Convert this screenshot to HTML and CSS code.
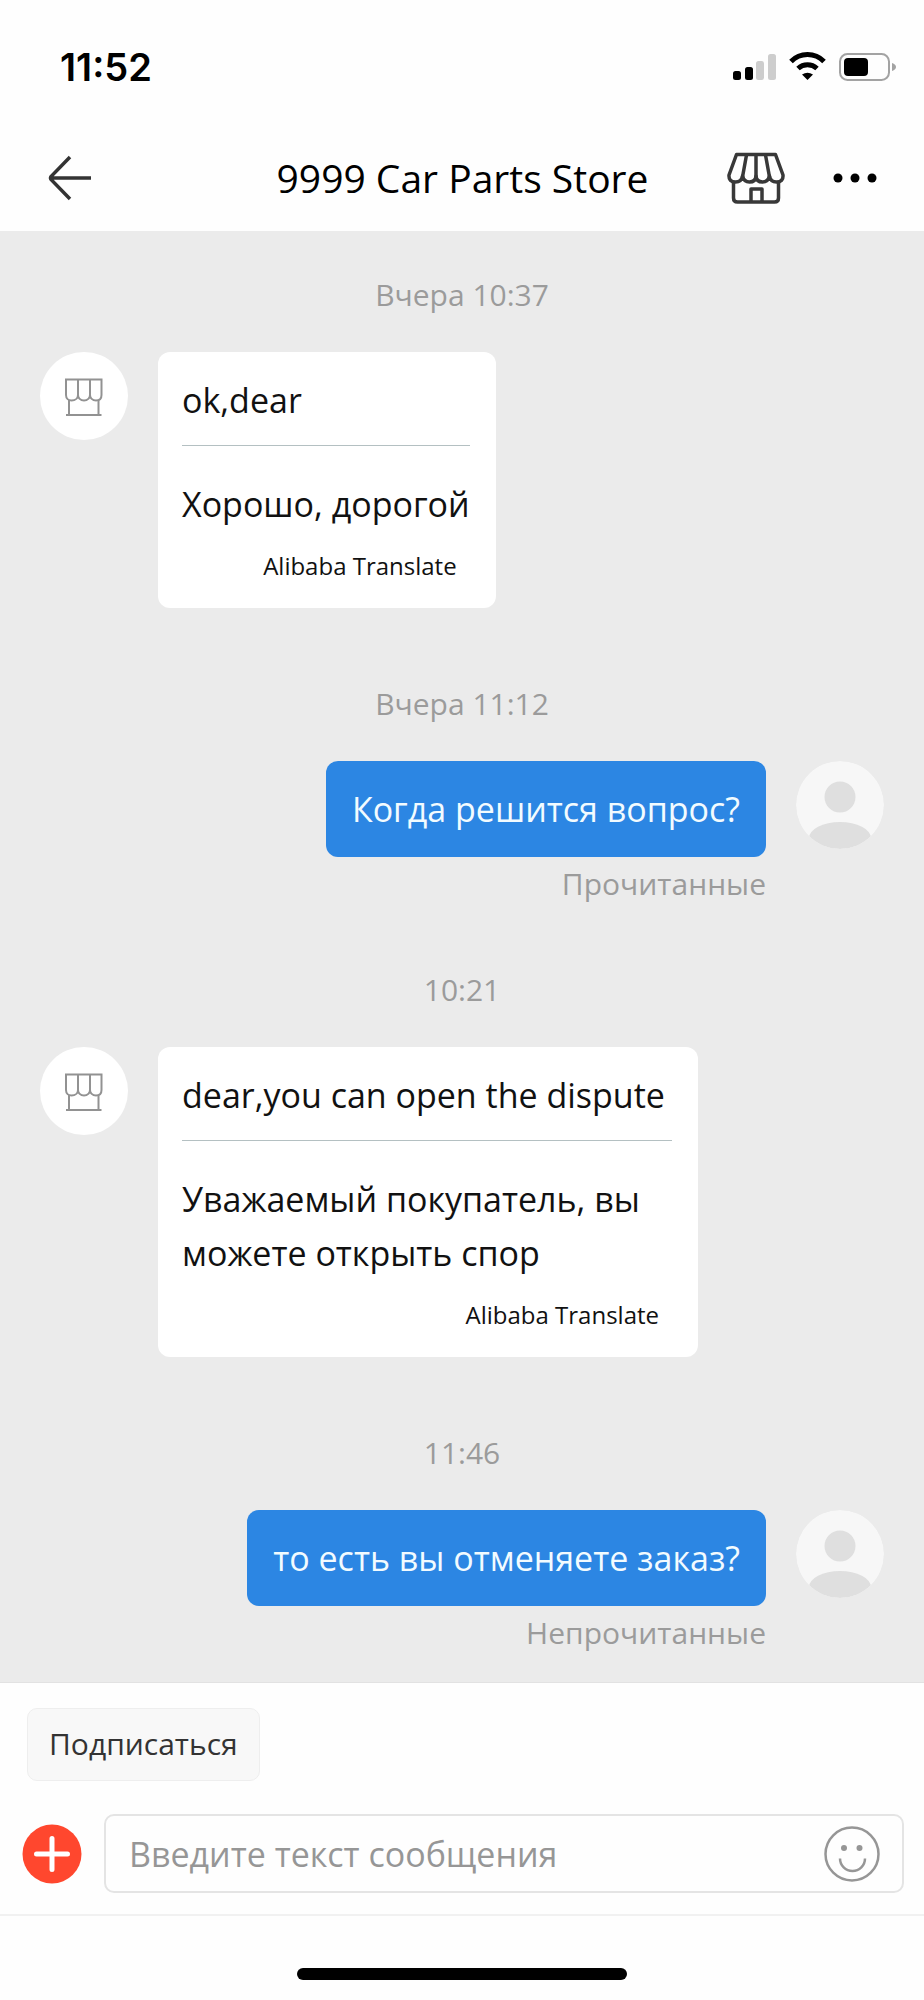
FILE: index.html
```html
<!DOCTYPE html>
<html lang="ru">
<head>
<meta charset="utf-8">
<meta name="viewport" content="width=device-width, initial-scale=1">
<title>9999 Car Parts Store</title>
<link rel="stylesheet" href="styles.css">
</head>
<body>
<svg class="defs" aria-hidden="true">
  <symbol id="shop-light" viewBox="0 0 88 88">
    <g fill="none" stroke="#929292" stroke-width="2">
      <path d="M26 27.500H61.500V43C61.500 46.500 59.500 48.500 56 48.500C52.500 48.500 50 46 50 43C50 46 47.500 48.500 44 48.500C40.500 48.500 38 46 38 43C38 46 35.500 48.500 31.500 48.500C28.500 48.500 26 46.500 26 43Z"/>
      <path d="M38 28V44M50 28V44M29 48V62M58.500 48V62M26 63H61.500"/>
    </g>
  </symbol>
  <symbol id="person" viewBox="0 0 88 88">
    <clipPath id="round"><circle cx="44" cy="44" r="44"/></clipPath>
    <g clip-path="url(#round)">
      <rect width="88" height="88" fill="#f7f7f7"/>
      <circle cx="44" cy="36" r="15.500" fill="#dfdfdf"/>
      <ellipse cx="44" cy="77" rx="31" ry="16" fill="#dfdfdf"/>
    </g>
  </symbol>
</svg>
<div class="screen">
  <div class="status-bar">
    <time class="clock">11:52</time>
    <svg class="indicators" viewBox="0 0 164 30" aria-hidden="true">
      <rect x="0" y="19" width="8" height="9" rx="2.500"/>
      <rect x="12" y="15" width="8" height="13" rx="2.500"/>
      <g fill="#cdcdcd"><rect x="23" y="9" width="8" height="19" rx="2.500"/><rect x="35" y="2" width="8" height="26" rx="2.500"/></g>
      <g fill="none" stroke="#000" stroke-width="5">
        <path d="M58 9.500A23 23 0 0 1 91 9.500"/>
        <path d="M65 16.500A14 14 0 0 1 84 16.500"/>
      </g>
      <path d="M69 22.500Q74.500 19 80 22.500L74.500 28Z"/>
      <rect x="107" y="2" width="49" height="26" rx="7.500" fill="none" stroke="#a3a3a3" stroke-width="2"/>
      <rect x="111" y="6" width="24" height="18" rx="4"/>
      <path d="M159 11Q163 12.500 163 15T159 19Z" fill="#a3a3a3"/>
    </svg>
  </div>
  <header class="header">
    <button class="icon-button back" aria-label="Назад">
      <svg width="44" height="46" viewBox="0 0 44 46" fill="none" stroke="#333" stroke-width="3.500"><path d="M22 2L3 21.500Q2 23 3 24.500L22 44M2 23H43"/></svg>
    </button>
    <h1 class="title">9999 Car Parts Store</h1>
    <div class="actions">
      <button class="icon-button" aria-label="Магазин">
        <svg width="58" height="52" viewBox="0 0 58 52" fill="none" stroke="#383838" stroke-width="3.500" stroke-linejoin="round">
          <path d="M9.500 2.500H48.500L56 23Q56.500 30 49.500 30Q43.500 30 42.500 24Q41 30 35.500 30Q29.500 30 29 24Q28.500 30 22.500 30Q17 30 15.500 24Q14.500 30 8.500 30Q1.500 30 2 23Z"/>
          <path d="M19.500 3L15.500 25M29 3V25M38.500 3L42.500 25M6.500 30V46Q6.500 50 10.500 50H47.500Q51.500 50 51.500 46V30M24 50V37H35V50"/>
        </svg>
      </button>
      <button class="icon-button" aria-label="Ещё">
        <svg width="44" height="44" viewBox="0 0 44 44"><circle cx="5" cy="22" r="4.500"/><circle cx="22" cy="22" r="4.500"/><circle cx="39" cy="22" r="4.500"/></svg>
      </button>
    </div>
  </header>
  <main class="chat">
    <time class="stamp">Вчера 10:37</time>
    <article class="message">
      <svg class="avatar shop"><use href="#shop-light"/></svg>
      <div class="bubble">
        <p class="original">ok,dear</p>
        <p class="translation">Хорошо, дорогой</p>
        <p class="credit">Alibaba Translate</p>
      </div>
    </article>
    <time class="stamp">Вчера 11:12</time>
    <article class="message own">
      <svg class="avatar"><use href="#person"/></svg>
      <div class="sent">
        <p class="bubble">Когда решится вопрос?</p>
        <p class="receipt">Прочитанные</p>
      </div>
    </article>
    <time class="stamp">10:21</time>
    <article class="message">
      <svg class="avatar shop"><use href="#shop-light"/></svg>
      <div class="bubble">
        <p class="original">dear,you can open the dispute</p>
        <p class="translation">Уважаемый покупатель, вы можете открыть спор</p>
        <p class="credit">Alibaba Translate</p>
      </div>
    </article>
    <time class="stamp">11:46</time>
    <article class="message own">
      <svg class="avatar"><use href="#person"/></svg>
      <div class="sent">
        <p class="bubble">то есть вы отменяете заказ?</p>
        <p class="receipt">Непрочитанные</p>
      </div>
    </article>
  </main>
  <footer class="composer">
    <button class="follow">Подписаться</button>
    <div class="entry">
      <button class="icon-button" aria-label="Добавить">
        <svg width="60" height="60" viewBox="0 0 60 60"><circle cx="30" cy="30" r="29.500" fill="#ff472e"/><path d="M30 14.500V45.500M14.500 30H45.500" stroke="#fff" stroke-width="5" stroke-linecap="round"/></svg>
      </button>
      <div class="field">
        <input class="text" type="text" aria-label="Сообщение" placeholder="Введите текст сообщения">
        <button class="icon-button" aria-label="Эмодзи">
          <svg width="56" height="56" viewBox="0 0 56 56" fill="none" stroke="#969696" stroke-width="2.500"><circle cx="28" cy="28" r="26.500"/><path d="M16 32.500A12.500 12.500 0 0 0 41 32.500"/><g fill="#969696" stroke="none"><circle cx="20" cy="22" r="3"/><circle cx="35.500" cy="22" r="3"/></g></svg>
        </button>
      </div>
    </div>
  </footer>
  <div class="home"><div class="home-bar"></div></div>
</div>
</body>
</html>
```
FILE: styles.css
```css
* {
  box-sizing: border-box;
}

body {
  margin: 0;
  background: #fefefe;
  color: #111;
  font-family: "Open Sans", "Noto Sans", sans-serif;
}

p,
h1 {
  margin: 0;
}

svg {
  display: block;
}

button {
  font-family: inherit;
  cursor: pointer;
}

.defs {
  position: absolute;
  width: 0;
  height: 0;
}

.screen {
  display: flex;
  flex-direction: column;
  min-height: 100vh;
}

.icon-button {
  flex: none;
  padding: 0;
  border: 0;
  background: none;
}

/* Status bar and header */
.status-bar {
  display: flex;
  align-items: center;
  justify-content: space-between;
  padding: 44px 27px 0 60px;
}

.clock {
  color: #000;
  font: 600 38px/46px Inter, sans-serif;
}

.indicators {
  width: 164px;
  height: 30px;
}

.header {
  display: grid;
  grid-template-columns: 1fr auto 1fr;
  align-items: center;
  padding: 34px 47px 0 48px;
}

.title {
  color: #000;
  font-size: 39px;
  font-weight: 400;
  line-height: 107px;
}

.back {
  justify-self: start;
}

.actions {
  display: flex;
  justify-content: flex-end;
  align-items: center;
  gap: 48px;
}

/* Conversation */
.chat {
  display: flex;
  flex-direction: column;
  flex: 1;
  padding: 44px 40px 29px;
  background: #ebebeb;
  border-bottom: 1px solid #e2e2e2;
}

.stamp {
  margin-bottom: 37px;
  color: #9b9b9b;
  font-size: 30px;
  line-height: 40px;
  text-align: center;
}

.message {
  display: flex;
  align-items: flex-start;
  gap: 30px;
  margin-bottom: 76px;
}

.own {
  flex-direction: row-reverse;
  margin-bottom: 66px;
}

.message:last-child {
  margin-bottom: 0;
}

.avatar {
  flex: none;
  width: 88px;
  height: 88px;
  border-radius: 50%;
}

.shop {
  background: #fff;
}

.bubble {
  max-width: 540px;
  padding: 21px 26px 24px 24px;
  border-radius: 12px;
  background: #fff;
  font-size: 34px;
  line-height: 54px;
}

.original {
  margin-bottom: 31px;
  padding-bottom: 18px;
  border-bottom: 1px solid #b4c0c2;
}

.credit {
  margin-top: 17px;
  padding-right: 13px;
  font-size: 24px;
  line-height: 36px;
  text-align: right;
}

.own .bubble {
  padding: 21px 26px;
  background: #2c86e3;
  color: #f2fbff;
}

.receipt {
  margin-top: 7px;
  color: #9b9b9b;
  font-size: 30px;
  line-height: 40px;
  text-align: right;
}

/* Composer */
.composer {
  padding: 25px 20px 21px 22px;
  border-bottom: 2px solid #f1f1f1;
}

.follow {
  display: block;
  margin: 0 0 33px 5px;
  padding: 14px 21px 15px;
  border: 1px solid #eee;
  border-radius: 10px;
  background: #f8f8f8;
  color: #333;
  font-size: 30px;
  line-height: 42px;
}

.entry {
  display: flex;
  align-items: center;
  gap: 22px;
}

.field {
  display: flex;
  flex: 1;
  align-items: center;
  min-width: 0;
  height: 79px;
  padding: 0 22px 0 23px;
  border: 2px solid #e4e4e4;
  border-radius: 10px;
}

.text {
  flex: 1;
  min-width: 0;
  padding: 0;
  border: 0;
  outline: 0;
  background: none;
  color: #111;
  font: 34px/54px "Open Sans", "Noto Sans", sans-serif;
}

.text::placeholder {
  color: #969696;
  opacity: 1;
}

.home {
  display: flex;
  justify-content: center;
  padding: 52px 0 20px;
}

.home-bar {
  width: 330px;
  height: 12px;
  border-radius: 6px;
  background: #000;
}
```
